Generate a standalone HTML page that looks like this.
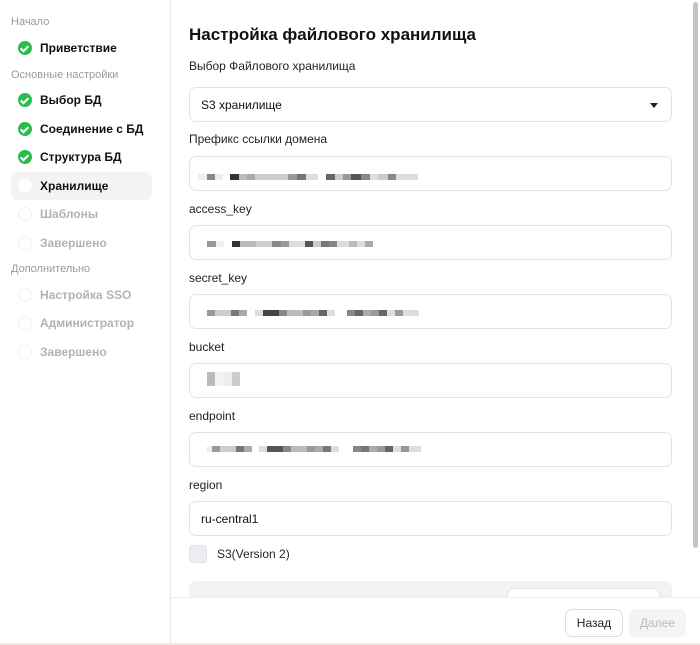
<!DOCTYPE html>
<html><head><meta charset="utf-8"><style>
*{box-sizing:border-box;margin:0;padding:0}
body{width:700px;height:645px;overflow:hidden;background:#fff;font-family:"Liberation Sans","DejaVu Sans",sans-serif;position:relative;color:#111}
.sb{position:absolute;left:0;top:0;width:171px;height:643px;border-right:1px solid #e8e8e8;background:#fff}
.h{position:absolute;left:11px;font-size:11px;color:#9a9a9a}
.it{position:absolute;left:11px;width:141px;height:28px;border-radius:7px;font-size:12px;font-weight:bold;display:flex;align-items:center;padding-left:29px}
.it .c{position:absolute;left:7px;top:7px;width:14px;height:14px;border-radius:50%}
.ok .c{background:#2dbb4e}
.ok .c:after{content:"";position:absolute;left:4px;top:3px;width:3px;height:6px;border:solid #fff;border-width:0 2px 2px 0;transform:rotate(45deg)}
.dis{color:#b3b3b3}
.dis .c{border:1px solid #f0f0f0}
.act{background:#f2f3f2}
.act .c{background:#fff}
.t{position:absolute;left:189px;top:25px;font-size:17px;font-weight:bold;color:#111}
.l{position:absolute;left:189px;font-size:12px;color:#222}
.f{position:absolute;left:189px;width:483px;height:35px;border:1px solid #e4e4e4;border-radius:7px;font-size:12px;padding-left:11px;display:flex;align-items:center}
.px{position:absolute;height:6px}
.sc{position:absolute;left:693px;top:2px;width:5px;height:546px;background:#c4c4c4;border-radius:3px}
.ft{position:absolute;left:171px;top:597px;width:529px;height:46px;border-top:1px solid #ececec;background:#fff}
.btn{position:absolute;top:609px;height:28px;border-radius:7px;font-size:12px;display:flex;align-items:center;justify-content:center}
</style></head><body>
<div class="sb">
<div class="h" style="top:16px">Начало</div>
<div class="it ok" style="top:34px"><span class="c"></span>Приветствие</div>
<div class="h" style="top:69px">Основные настройки</div>
<div class="it ok" style="top:86px"><span class="c"></span>Выбор БД</div>
<div class="it ok" style="top:115px"><span class="c"></span>Соединение с БД</div>
<div class="it ok" style="top:143px"><span class="c"></span>Структура БД</div>
<div class="it act" style="top:172px"><span class="c"></span>Хранилище</div>
<div class="it dis" style="top:200px"><span class="c"></span>Шаблоны</div>
<div class="it dis" style="top:229px"><span class="c"></span>Завершено</div>
<div class="h" style="top:263px">Дополнительно</div>
<div class="it dis" style="top:281px"><span class="c"></span>Настройка SSO</div>
<div class="it dis" style="top:309px"><span class="c"></span>Администратор</div>
<div class="it dis" style="top:338px"><span class="c"></span>Завершено</div>
</div>
<div class="t">Настройка файлового хранилища</div>
<div class="l" style="top:59px">Выбор Файлового хранилища</div>
<div class="f" style="top:87px">S3 хранилище<span style="position:absolute;right:13px;top:15px;border:4px solid transparent;border-top:5px solid #222;border-bottom:0"></span></div>
<div class="l" style="top:132px">Префикс ссылки домена</div>
<div class="f" style="top:156px"></div>
<div class="px" style="top:174px;left:198px;width:220px;background:linear-gradient(90deg,#eee 0 9px,#888 9px 17px,#eee 17px 25px,#fff 25px 32px,#333 32px 41px,#bbb 41px 49px,#aaa 49px 57px,#ccc 57px 90px,#999 90px 99px,#777 99px 108px,#ddd 108px 120px,#fff 120px 128px,#666 128px 137px,#ccc 137px 145px,#999 145px 153px,#555 153px 163px,#888 163px 172px,#ddd 172px 180px,#ccc 180px 190px,#888 190px 198px,#ddd 198px 220px)"></div>
<div class="l" style="top:202px">access_key</div>
<div class="f" style="top:225px"></div>
<div class="px" style="top:241px;left:207px;width:166px;background:linear-gradient(90deg,#999 0 9px,#eee 9px 17px,#fff 17px 25px,#333 25px 33px,#bbb 33px 49px,#ccc 49px 65px,#888 65px 74px,#999 74px 82px,#ddd 82px 98px,#555 98px 106px,#ccc 106px 114px,#777 114px 122px,#888 122px 130px,#ddd 130px 142px,#bbb 142px 150px,#ddd 150px 158px,#aaa 158px 166px)"></div>
<div class="l" style="top:271px">secret_key</div>
<div class="f" style="top:294px"></div>
<div class="px" style="top:310px;left:207px;width:212px;background:linear-gradient(90deg,#999 0 8px,#ccc 8px 24px,#777 24px 32px,#aaa 32px 40px,#fff 40px 48px,#ddd 48px 56px,#444 56px 72px,#888 72px 80px,#bbb 80px 96px,#999 96px 104px,#aaa 104px 112px,#666 112px 120px,#ddd 120px 128px,#fff 128px 140px,#888 140px 148px,#666 148px 156px,#aaa 156px 164px,#999 164px 172px,#666 172px 180px,#ddd 180px 188px,#999 188px 196px,#ddd 196px 212px)"></div>
<div class="l" style="top:340px">bucket</div>
<div class="f" style="top:363px"></div>
<div class="px" style="top:372px;left:207px;width:33px;height:14px;background:linear-gradient(90deg,#bbb 0 8px,#f3f3f3 8px 17px,#eee 17px 25px,#ccc 25px 33px)"></div>
<div class="l" style="top:409px">endpoint</div>
<div class="f" style="top:432px"></div>
<div class="px" style="top:446px;left:207px;width:214px;background:linear-gradient(90deg,#eee 0 5px,#999 5px 13px,#ccc 13px 29px,#777 29px 37px,#aaa 37px 45px,#fff 45px 52px,#ddd 52px 60px,#555 60px 76px,#888 76px 84px,#bbb 84px 100px,#999 100px 108px,#aaa 108px 116px,#777 116px 124px,#ddd 124px 132px,#fff 132px 146px,#888 146px 154px,#777 154px 162px,#aaa 162px 170px,#999 170px 178px,#666 178px 186px,#ddd 186px 194px,#999 194px 202px,#ddd 202px 214px)"></div>
<div class="l" style="top:478px">region</div>
<div class="f" style="top:501px">ru-central1</div>
<div style="position:absolute;left:189px;top:545px;width:18px;height:18px;border-radius:4px;background:#eeeef2;border:1px solid #e2e2e6"></div>
<div class="l" style="top:547px;left:217px">S3(Version 2)</div>
<div style="position:absolute;left:189px;top:581px;width:483px;height:40px;border-radius:8px;background:#f2f2f2"></div>
<div style="position:absolute;left:507px;top:588px;width:153px;height:30px;border-radius:7px;background:#fff;border:1px solid #e4e4e4"></div>
<div class="sc"></div>
<div class="ft"></div>
<div class="btn" style="left:565px;width:58px;border:1px solid #ddd;color:#222;background:#fff">Назад</div>
<div class="btn" style="left:629px;width:57px;background:#f4f4f6;color:#bbb">Далее</div>
<div style="position:absolute;left:0;top:643px;width:700px;height:2px;background:#ecebdc"></div>
</body></html>
